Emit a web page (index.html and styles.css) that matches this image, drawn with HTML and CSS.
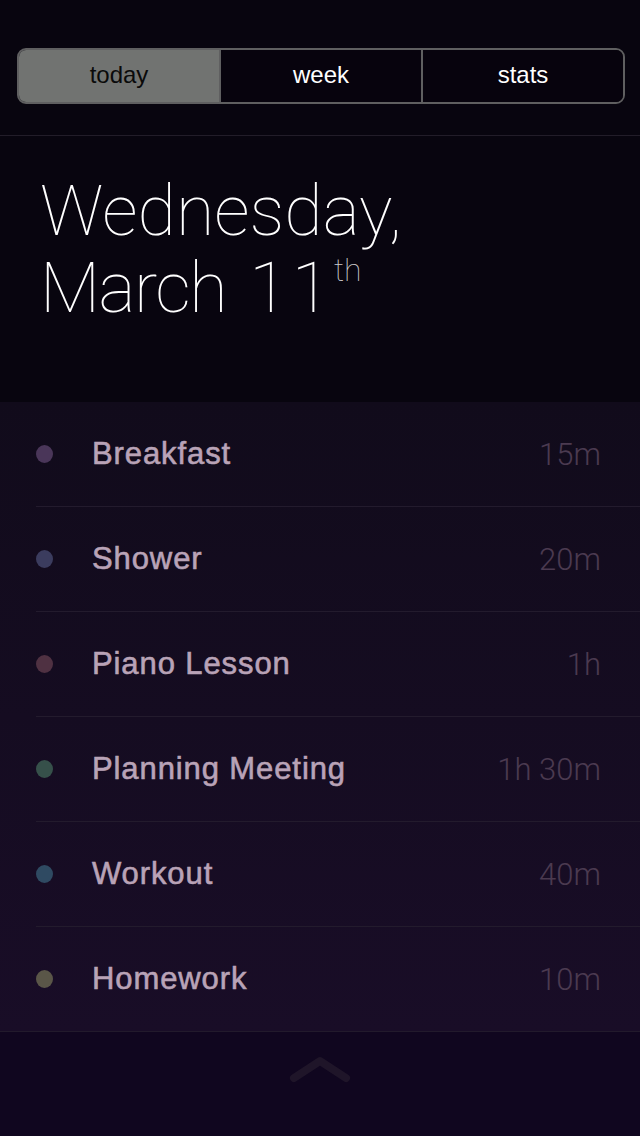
FILE: index.html
```html
<!DOCTYPE html>
<html>
<head>
<meta charset="utf-8">
<link rel="stylesheet" href="styles.css">
</head>
<body>
<div class="screen">
  <div class="topbar">
    <div class="segmented">
      <div class="seg seg-active">today</div>
      <div class="seg">week</div>
      <div class="seg">stats</div>
    </div>
  </div>
  <div class="date">
    <div class="date-line">Wednesday,</div>
    <div class="date-line line-2">March <span class="num">11</span><sup class="ord">th</sup></div>
  </div>
  <div class="list">
    <div class="row"><span class="dot dot-1"></span><span class="name">Breakfast</span><span class="dur">15m</span></div>
    <div class="row"><span class="dot dot-2"></span><span class="name">Shower</span><span class="dur">20m</span></div>
    <div class="row"><span class="dot dot-3"></span><span class="name">Piano Lesson</span><span class="dur">1h</span></div>
    <div class="row"><span class="dot dot-4"></span><span class="name">Planning Meeting</span><span class="dur">1h 30m</span></div>
    <div class="row"><span class="dot dot-5"></span><span class="name">Workout</span><span class="dur">40m</span></div>
    <div class="row"><span class="dot dot-6"></span><span class="name">Homework</span><span class="dur">10m</span></div>
  </div>
  <div class="footer">
    <svg class="chevron" width="64" height="30" viewBox="0 0 64 30"><path d="M6 24 L32 7 L58 24" fill="none" stroke="#1f1529" stroke-width="8" stroke-linecap="round" stroke-linejoin="round"/></svg>
  </div>
</div>
</body>
</html>
```

FILE: styles.css
```css
html, body {
  margin: 0;
  padding: 0;
  background: #08050f;
}
.screen {
  width: 640px;
  height: 1136px;
  display: flex;
  flex-direction: column;
  background: #08050f;
  font-family: "Liberation Sans", Arial, sans-serif;
}
.topbar {
  padding: 48px 15px 31px 17px;
  border-bottom: 1px solid #221d29;
}
.segmented {
  display: flex;
  height: 56px;
  box-sizing: border-box;
  border: 2px solid #5f5f60;
  border-radius: 9px;
  overflow: hidden;
}
.seg {
  flex: 1;
  display: flex;
  align-items: center;
  justify-content: center;
  padding-bottom: 3px;
  color: #ffffff;
  font-size: 24px;
  background: #07030d;
}
.seg + .seg {
  border-left: 2px solid #5f5f60;
}
.seg-active {
  background: #717371;
  color: #0a0a0a;
}
.date {
  height: 266px;
  padding: 37px 0 0 40px;
  box-sizing: border-box;
  color: #ffffff;
  font-family: "Roboto", "Lato", sans-serif;
  font-weight: 100;
  font-size: 70px;
  line-height: 77px;
}
.date-line {
  white-space: nowrap;
}
.line-2 {
  letter-spacing: -1.5px;
}
.num {
  letter-spacing: 4px;
  margin-left: 8px;
}
.ord {
  font-size: 32px;
  letter-spacing: 0;
  vertical-align: top;
  line-height: 32px;
  position: relative;
  top: 4px;
  margin-left: 0;
  color: #cccccc;
}
.list {
  background: linear-gradient(#110b1b, #190d27);
  border-bottom: 1px solid #221a2c;
  padding-left: 36px;
}
.row {
  display: flex;
  align-items: center;
  height: 104px;
  padding-right: 39px;
}
.row + .row {
  border-top: 1px solid #231b2d;
}
.dot {
  width: 17px;
  height: 18px;
  border-radius: 50%;
  flex: none;
}
.dot-1 { background: #4a3659; }
.dot-2 { background: #3b3c5e; }
.dot-3 { background: #4f3142; }
.dot-4 { background: #36504a; }
.dot-5 { background: #2f4a62; }
.dot-6 { background: #5a5648; }
.name {
  margin-left: 39px;
  flex: 1;
  color: #b9a3b7;
  font-size: 31px;
  letter-spacing: 0.9px;
  -webkit-text-stroke: 0.6px #b9a3b7;
}
.dur {
  color: #4b3a50;
  font-size: 31px;
  font-family: "Roboto", "Liberation Sans", sans-serif;
  font-weight: 300;
}
.footer {
  flex: 1;
  background: #10061f;
  display: flex;
  justify-content: center;
  padding-top: 22px;
}
.chevron {
  display: block;
}
```
